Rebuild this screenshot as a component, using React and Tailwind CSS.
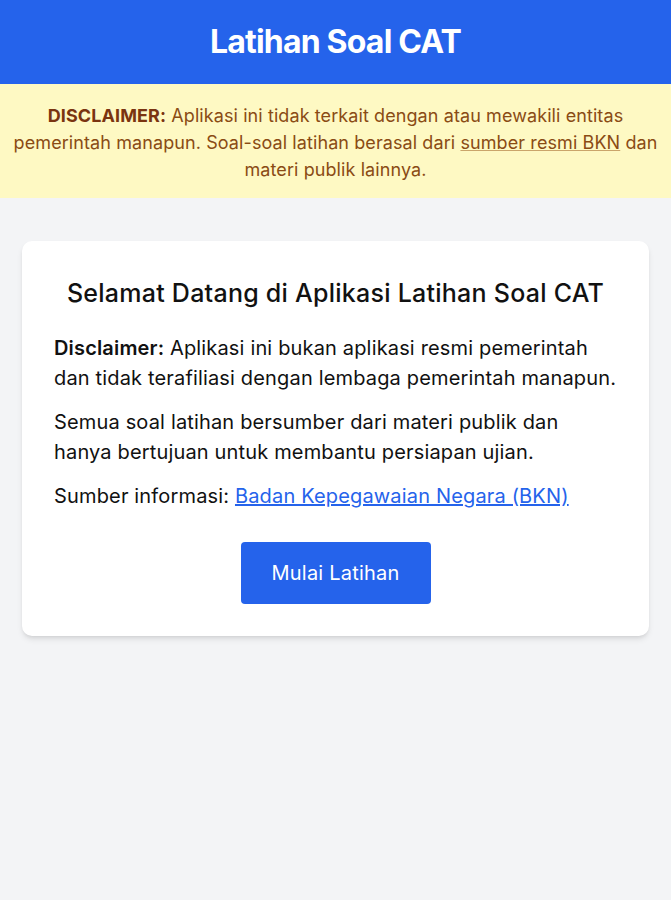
import React from 'react';

const App = () => {
  return (
    <div className="min-h-[900px] bg-[#f3f4f6] font-['Inter','Liberation_Sans',sans-serif]">
      {/* Header */}
      <header className="bg-[#2563eb] h-[84px] flex items-center justify-center">
        <h1 className="text-white text-[32px] font-bold tracking-tight">Latihan Soal CAT</h1>
      </header>

      {/* Top disclaimer */}
      <div className="bg-[#fef9c3] text-[#8a4b14] text-[18px] leading-[27px] text-center px-[10px] pt-[18px] pb-[15px] tracking-[0.005em]">
        <strong className="font-bold text-[#7a3410]">DISCLAIMER:</strong> Aplikasi ini tidak terkait dengan atau mewakili entitas
        pemerintah manapun. Soal-soal latihan berasal dari{' '}
        <a href="#" className="underline decoration-[#caa56a]">sumber resmi BKN</a> dan materi publik lainnya.
      </div>

      {/* Card */}
      <main className="px-[22px] pt-[43px]">
        <div className="bg-white rounded-[10px] shadow-md px-[32px] pt-[34px] pb-[32px]">
          <h2 className="text-center text-[25px] font-medium text-[#111] mb-[20px] tracking-[0.01em]">
            Selamat Datang di Aplikasi Latihan Soal CAT
          </h2>
          <p className="text-[20px] leading-[30px] text-[#111] mb-[14px] tracking-[0.008em]">
            <strong className="font-semibold">Disclaimer:</strong> Aplikasi ini bukan aplikasi resmi pemerintah
            dan tidak terafiliasi dengan lembaga pemerintah manapun.
          </p>
          <p className="text-[20px] leading-[30px] text-[#111] mb-[14px] tracking-[0.008em]">
            Semua soal latihan bersumber dari materi publik dan hanya bertujuan untuk membantu persiapan ujian.
          </p>
          <p className="text-[20px] leading-[30px] text-[#111] tracking-[0.008em]">
            Sumber informasi:{' '}
            <a href="#" className="text-[#2563eb] underline">Badan Kepegawaian Negara (BKN)</a>
          </p>
          <div className="flex justify-center mt-[31px]">
            <button className="bg-[#2563eb] text-white text-[20px] w-[190px] h-[62px] rounded-[4px] tracking-[0.01em]">
              Mulai Latihan
            </button>
          </div>
        </div>
      </main>
    </div>
  );
};

export default App;
